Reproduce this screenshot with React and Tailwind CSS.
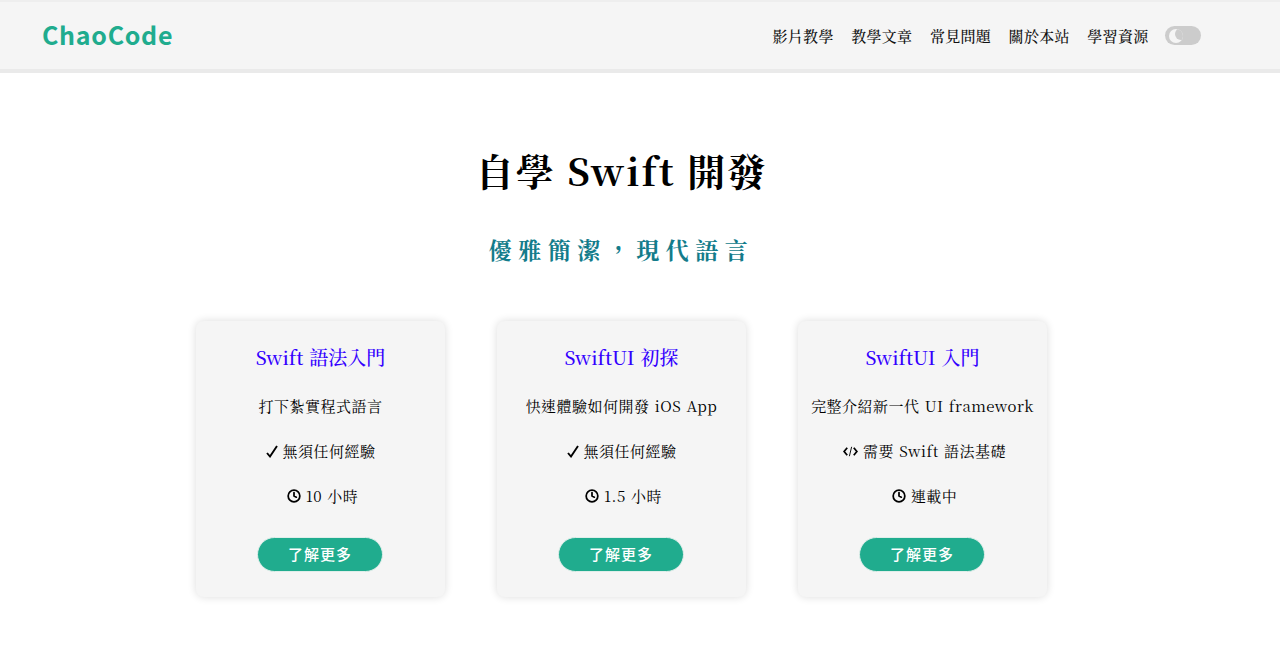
import { Clock } from 'lucide-react'

const navLinks = ['影片教學', '教學文章', '常見問題', '關於本站', '學習資源']

const courses = [
  { title: 'Swift 語法入門', desc: '打下紮實程式語言', need: '無須任何經驗', code: false, time: '10 小時' },
  { title: 'SwiftUI 初探', desc: '快速體驗如何開發 iOS App', need: '無須任何經驗', code: false, time: '1.5 小時' },
  { title: 'SwiftUI 入門', desc: '完整介紹新一代 UI framework', need: '需要 Swift 語法基礎', code: true, time: '連載中' },
]

const CheckIcon = () => (
  <svg width="12" height="13" viewBox="0 0 12 13" fill="none" stroke="#000" strokeWidth="1.9">
    <path d="M1 8 L4 11.5 L11 1" />
  </svg>
)

const CodeIcon = () => (
  <svg width="15" height="11" viewBox="0 0 16 11" fill="none" stroke="#000">
    <path d="M4.5 1.5 L1.2 5.5 L4.5 9.5 M11.5 1.5 L14.8 5.5 L11.5 9.5" strokeWidth="1.9" />
    <path d="M9.2 0.5 L6.8 10.5" strokeWidth="1" />
  </svg>
)

const Card = ({ course }) => (
  <div className="w-[249px] h-[276px] bg-[#f5f5f5] rounded-lg shadow-[0_0_8px_rgba(0,0,0,0.14)] flex flex-col items-center text-[15px] text-black [word-spacing:1px]">
    <h3 className="mt-[23px] h-[26px] leading-[26px] text-[19px] text-[#3300ff] font-medium">{course.title}</h3>
    <p className="mt-[24px] h-[24px] leading-[24px] tracking-[0.48px] whitespace-nowrap">{course.desc}</p>
    <p className={course.code
      ? "mt-[21px] h-[24px] pl-[4px] flex items-center gap-[5px] tracking-[0.48px] whitespace-nowrap"
      : "mt-[21px] h-[24px] flex items-center gap-[5px] tracking-[0.48px] whitespace-nowrap"}>
      {course.code ? <CodeIcon /> : <CheckIcon />}
      {course.need}
    </p>
    <p className="mt-[21px] h-[24px] pl-[4px] flex items-center gap-[5px] tracking-[0.48px] whitespace-nowrap">
      <Clock size={14} strokeWidth={3} />
      {course.time}
    </p>
    <button className="mt-[29px] -ml-[1px] w-[126px] h-[35px] rounded-full bg-[#20ac8e] border border-[#dfeeea] text-white text-[15px] font-medium tracking-[1px] font-['Noto_Sans_CJK_TC',sans-serif]">
      了解更多
    </button>
  </div>
)

const App = () => {
  return (
    <div className="min-h-[646px] bg-white font-['Noto_Serif_CJK_TC','Noto_Serif_TC','Liberation_Serif','Noto_Sans_CJK_TC',serif]">
      <header className="h-[73px] bg-[#f5f5f5] border-t-2 border-t-[#eeeeee] border-b-4 border-b-[#eaeaea] pl-[42px] pr-[79px] flex items-center justify-between">
        <a className="-mt-[2px] text-[25px] font-bold text-[#20ac8e] tracking-[0.7px] font-['Noto_Sans_CJK_TC',sans-serif]">ChaoCode</a>
        <nav className="flex items-center gap-[17.5px] text-[15px] text-[#111] font-medium tracking-[0.3px]">
          {navLinks.map((link) => (
            <a key={link} className="mt-[1px]">{link}</a>
          ))}
          <div className="w-[36px] h-[19px] rounded-full bg-[#cccccc] flex items-center pl-[4px] -ml-[1px]">
            <span className="relative w-[14px] h-[14px] rounded-full bg-[#f5f5f5] overflow-hidden">
              <span className="absolute left-[6px] -top-[1px] w-[12px] h-[12px] rounded-full bg-[#cccccc]"></span>
            </span>
          </div>
        </nav>
      </header>
      <main className="w-[1243px] flex flex-col items-center">
        <h1 className="mt-[71px] h-[52px] leading-[52px] text-[38px] font-bold text-black tracking-[2px]">自學 Swift 開發</h1>
        <h2 className="mt-[37px] h-[34px] leading-[34px] text-[23px] font-bold text-[#137c8b] tracking-[6.5px]">優雅簡潔，現代語言</h2>
        <div className="mt-[54px] flex gap-[52px]">
          {courses.map((course) => (
            <Card key={course.title} course={course} />
          ))}
        </div>
      </main>
    </div>
  )
}

export default App
